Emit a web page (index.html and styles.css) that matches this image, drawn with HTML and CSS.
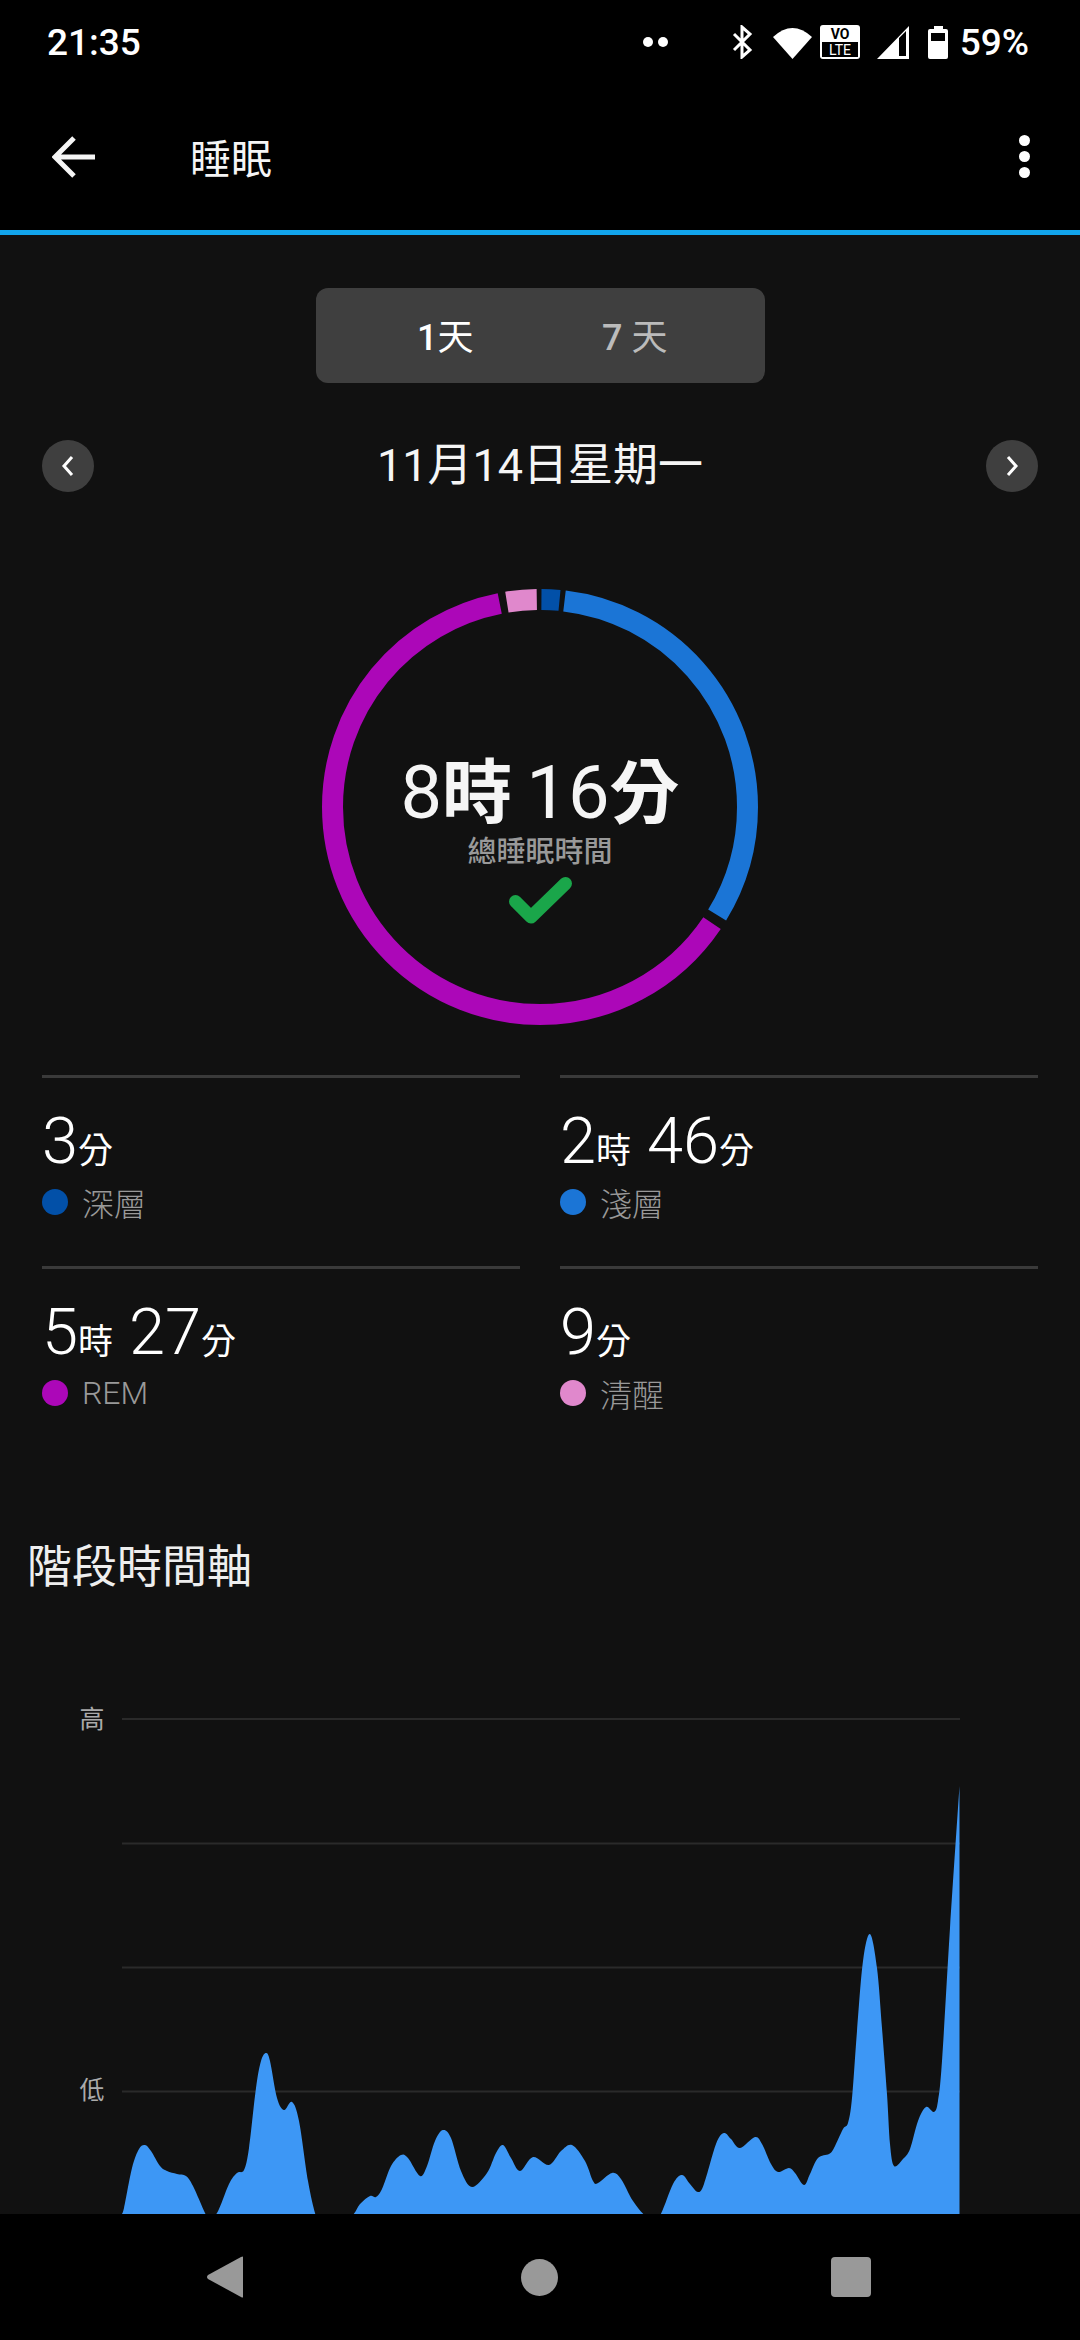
FILE: index.html
```html
<!DOCTYPE html>
<html lang="zh-Hant">
<head>
  <meta charset="UTF-8" />
  <title>睡眠</title>
  <link rel="stylesheet" href="styles.css">
</head>
<body>

  <div class="screen">
    <header class="top">
      <div class="status">
        <span class="clock">21:35</span>
        <div class="status-icons">
          <svg class="dots" width="25" height="10" viewBox="0 0 25 10"><circle cx="5" cy="5" r="5"/><circle cx="20" cy="5" r="5"/></svg>
          <svg class="bt" width="21" height="34" viewBox="0 0 21 34"><path d="M2 9 L18 25 L10 32 V2 L18 9 L2 25" fill="none" stroke="#fff" stroke-width="3"/></svg>
          <svg class="wifi" width="39" height="33" viewBox="0 0 39 33"><path d="M0 11 Q19.5 -7 39 11 L19.5 33 Z"/></svg>
          <svg class="volte" width="40" height="34" viewBox="0 0 40 34">
            <rect width="40" height="34" rx="3"/>
            <rect x="2" y="17" width="36" height="15" fill="#000"/>
            <text x="20" y="14" class="volte-top">VO</text>
            <text x="20" y="30" class="volte-bottom">LTE</text>
          </svg>
          <svg class="signal" width="32" height="33" viewBox="0 0 32 33"><path fill-rule="evenodd" d="M0 33 L32 0 V33 Z M22 12 V30 H29 V5 Z"/></svg>
          <svg class="battery" width="20" height="33" viewBox="0 0 20 33"><path fill-rule="evenodd" d="M6 0 H15 V3 H18 Q20 3 20 5 V31 Q20 33 18 33 H2 Q0 33 0 31 V5 Q0 3 2 3 H6 Z M3 7 V15 H17 V7 Z"/></svg>
          <span class="pct">59%</span>
        </div>
      </div>
      <div class="toolbar">
        <svg class="back" width="44" height="42" viewBox="0 0 44 42"><path d="M43 21 H4 M22 2 L3 21 L22 40" fill="none" stroke="#f5f5f5" stroke-width="5"/></svg>
        <h1 class="page-title">睡眠</h1>
        <svg class="kebab" width="11" height="44" viewBox="0 0 11 44"><circle cx="5.5" cy="5.5" r="5.5"/><circle cx="5.5" cy="21.5" r="5.5"/><circle cx="5.5" cy="37.5" r="5.5"/></svg>
      </div>
    </header>

    <main class="content">
      <div class="toggle">
        <span class="toggle-item active"><span class="num">1</span>天</span>
        <span class="toggle-item"><span class="num">7</span> 天</span>
      </div>

      <div class="date-row">
        <span class="round-btn"><svg width="14" height="20" viewBox="0 0 14 20"><path d="M11 1 L3 10 L11 19" fill="none" stroke="#fff" stroke-width="3"/></svg></span>
        <span class="date">11月14日星期一</span>
        <span class="round-btn"><svg width="14" height="20" viewBox="0 0 14 20"><path d="M3 1 L11 10 L3 19" fill="none" stroke="#fff" stroke-width="3"/></svg></span>
      </div>

      <div class="ring-box">
        <svg class="ring" width="436" height="436" viewBox="0 0 436 436">
          <g transform="rotate(-90 218 218)" fill="none" stroke-width="21">
            <circle cx="218" cy="218" r="207.5" pathLength="360" stroke="#0250a8" stroke-dasharray="5 355" stroke-dashoffset="-0.4"/>
            <circle cx="218" cy="218" r="207.5" pathLength="360" stroke="#1b75d6" stroke-dasharray="114.6 245.4" stroke-dashoffset="-6.8"/>
            <circle cx="218" cy="218" r="207.5" pathLength="360" stroke="#ac07b8" stroke-dasharray="224.8 135.2" stroke-dashoffset="-124"/>
            <circle cx="218" cy="218" r="207.5" pathLength="360" stroke="#e088cc" stroke-dasharray="8.3 351.7" stroke-dashoffset="-350.8"/>
          </g>
        </svg>
        <div class="ring-center">
          <div class="total">8<span class="total-unit">時</span> 16<span class="total-unit">分</span></div>
          <div class="total-label">總睡眠時間</div>
          <svg class="check" width="63" height="47" viewBox="0 0 63 47"><path d="M6.5 24.5 L22 40 L56.5 6.5" fill="none" stroke="#1aa64a" stroke-width="13" stroke-linejoin="round" stroke-linecap="round"/></svg>
        </div>
      </div>

      <div class="stages">
        <div class="stage">
          <div class="stage-value">3<span class="unit">分</span></div>
          <div class="stage-label"><i class="dot deep"></i>深層</div>
        </div>
        <div class="stage">
          <div class="stage-value">2<span class="unit">時</span> 46<span class="unit">分</span></div>
          <div class="stage-label"><i class="dot light"></i>淺層</div>
        </div>
        <div class="stage">
          <div class="stage-value">5<span class="unit">時</span> 27<span class="unit">分</span></div>
          <div class="stage-label"><i class="dot rem"></i>REM</div>
        </div>
        <div class="stage">
          <div class="stage-value">9<span class="unit">分</span></div>
          <div class="stage-label"><i class="dot awake"></i>清醒</div>
        </div>
      </div>

      <h2 class="section-title">階段時間軸</h2>

      <svg class="chart" width="1080" height="534" viewBox="0 1680 1080 534">
        <g class="chart-grid">
          <line x1="122" x2="960" y1="1718" y2="1718"/>
          <line x1="122" x2="960" y1="1842.5" y2="1842.5"/>
          <line x1="122" x2="960" y1="1966.5" y2="1966.5"/>
          <line x1="122" x2="960" y1="2090.5" y2="2090.5"/>
        </g>
        <text class="chart-label" x="92" y="1727">高</text>
        <text class="chart-label" x="92" y="2098">低</text>
        <path id="sleep-area" class="chart-area"></path>
      </svg>
    </main>

    <nav class="navbar">
      <svg width="36" height="42" viewBox="0 0 36 42"><path d="M36 1 V41 Q36 42 34 41 L1 23 Q-1 21 1 19 L34 1 Q36 0 36 1 Z"/></svg>
      <svg class="nav-home" width="37" height="37" viewBox="0 0 37 37"><circle cx="18.5" cy="18.5" r="18.5"/></svg>
      <svg width="40" height="40" viewBox="0 0 40 40"><rect width="40" height="40" rx="4"/></svg>
    </nav>
  </div>

  <script src="chart.js"></script>
</body>
</html>
```

FILE: styles.css
```css
* {
  box-sizing: border-box;
}
html, body {
  margin: 0;
  padding: 0;
}
body {
  width: 1080px;
  height: 2340px;
  background: #000;
  color: #fff;
  font-family: Roboto, "Noto Sans CJK TC", sans-serif;
  overflow: hidden;
}
svg {
  display: block;
  fill: #fff;
}
.screen {
  height: 2340px;
  display: flex;
  flex-direction: column;
}

/* top */
.top {
  background: #000;
  border-bottom: 5px solid #12a5ec;
  height: 235px;
  flex: none;
}
.status {
  height: 84px;
  padding: 0 51px 0 47px;
  display: flex;
  align-items: center;
  justify-content: space-between;
}
.clock, .pct {
  font-size: 37px;
  font-weight: 500;
}
.status-icons {
  display: flex;
  align-items: center;
}
.dots { margin-right: 64px; }
.bt { margin-right: 20px; }
.wifi { margin-right: 8px; }
.volte { margin-right: 17px; }
.signal { margin-right: 19px; }
.battery { margin-right: 12px; }
.volte-top, .volte-bottom {
  text-anchor: middle;
  font-size: 14px;
}
.volte-top {
  fill: #000;
  font-weight: 700;
}
.toolbar {
  height: 146px;
  padding: 0 52px;
  display: flex;
  align-items: center;
}
.page-title {
  margin: 0 0 3px 94px;
  font-size: 41px;
  font-weight: 400;
  color: #f5f5f5;
}
.kebab {
  margin-left: auto;
  margin-right: -2px;
}

/* content */
.content {
  flex: 1;
  min-height: 0;
  overflow: hidden;
  background: #111;
  padding-top: 53px;
}
.toggle {
  width: 449px;
  height: 95px;
  margin: 0 auto;
  padding: 0 35px 3px;
  background: #3f3f3f;
  border-radius: 12px;
  display: flex;
  align-items: center;
}
.toggle-item {
  flex: 1;
  text-align: center;
  font-size: 36px;
  color: #bbb;
}
.toggle-item.active {
  color: #fff;
}
.num {
  font-weight: 500;
}
.date-row {
  height: 52px;
  margin-top: 57px;
  padding: 0 42px;
  display: flex;
  align-items: center;
  justify-content: space-between;
}
.round-btn {
  width: 52px;
  height: 52px;
  border-radius: 50%;
  background: #3f3f3f;
  display: flex;
  align-items: center;
  justify-content: center;
}
.date {
  font-size: 45px;
  line-height: 52px;
  color: #f5f5f5;
}

/* ring */
.ring-box {
  position: relative;
  width: 436px;
  height: 436px;
  margin: 97px auto 0;
}
.ring-center {
  position: absolute;
  inset: 0;
  padding-top: 162px;
  display: flex;
  flex-direction: column;
  align-items: center;
}
.total {
  font-size: 74px;
  line-height: 84px;
  word-spacing: -4px;
  color: #f5f5f5;
  white-space: nowrap;
}
.total-unit {
  font-size: 70px;
  line-height: 1;
  font-weight: 700;
}
.total-label {
  font-size: 29px;
  line-height: 34px;
  font-weight: 500;
  color: #999;
}
.check {
  margin-top: 8px;
}

/* stage grid */
.stages {
  margin-top: 50px;
  padding: 0 42px;
  display: grid;
  grid-template-columns: 478px 478px;
  column-gap: 40px;
}
.stage {
  height: 191px;
  border-top: 3px solid #3a3a3a;
  padding-top: 28px;
}
.stage-value {
  font-size: 65px;
  line-height: 70px;
  font-weight: 300;
  color: #fff;
  white-space: nowrap;
}
.unit {
  font-size: 35px;
  line-height: 1;
  font-weight: 400;
}
.stage-label {
  margin-top: 6px;
  height: 40px;
  display: flex;
  align-items: center;
  font-size: 32px;
  font-weight: 300;
  color: #999;
}
.dot {
  width: 26px;
  height: 26px;
  border-radius: 50%;
  margin-right: 14px;
}
.deep { background: #0250a8; }
.light { background: #1b75d6; }
.rem { background: #ac07b8; }
.awake { background: #e088cc; }

/* chart */
.section-title {
  margin: 81px 0 0;
  padding-left: 27px;
  font-size: 45px;
  line-height: 60px;
  font-weight: 400;
  color: #eee;
}
.chart {
  margin-top: 83px;
}
.chart-grid line {
  stroke: #2a2a2a;
  stroke-width: 2;
}
.chart-label {
  fill: #aaa;
  font-size: 25px;
  text-anchor: middle;
}
.chart-area {
  fill: #3d97f5;
}

/* nav */
.navbar {
  height: 126px;
  flex: none;
  background: #000;
  padding: 0 209px 0 207px;
  display: flex;
  align-items: center;
  justify-content: space-between;
}
.navbar svg {
  fill: #999;
}
.nav-home {
  margin-left: 5px;
}
```

FILE: chart.js
```js
// traced points of the sleep stage curve, page coordinates
const points = [
  [121,2214],[124,2207],[132,2167],[139,2148],[145,2144],[151,2150],[160,2165],[167,2170],
  [177,2173],[186,2175],[193,2185],[205,2212],[208,2216],[217,2212],[229,2183],[237,2172],
  [244,2169],[249,2147],[256,2087],[261,2060],[266,2052],[270,2060],[277,2097],[284,2109],
  [292,2101],[299,2120],[308,2180],[315,2212],[318,2216],[349,2216],[360,2203],[370,2195],
  [376,2196],[382,2188],[391,2165],[401,2154],[408,2157],[420,2175],[427,2165],[435,2140],
  [443,2129],[451,2137],[461,2170],[472,2186],[487,2172],[496,2152],[503,2144],[511,2157],
  [520,2170],[533,2156],[549,2164],[561,2150],[572,2144],[585,2160],[593,2180],[598,2182],
  [612,2172],[621,2178],[633,2200],[647,2216],[659,2216],[673,2183],[682,2174],[690,2183],
  [698,2191],[704,2183],[716,2143],[724,2132],[731,2138],[740,2147],[755,2136],[762,2143],
  [771,2163],[778,2171],[789,2167],[795,2172],[804,2184],[810,2173],[818,2157],[829,2153],
  [834,2147],[843,2128],[848,2122],[852,2097],[857,2030],[863,1960],[870,1933],[877,1967],
  [882,2027],[887,2093],[890,2143],[894,2165],[903,2158],[910,2148],[918,2120],[926,2106],
  [934,2111],[938,2100],[942,2060],[950,1927],[959.5,1785]
];

let d = `M${points[0][0]} ${points[0][1]}`;
for (let i = 0; i < points.length - 1; i++) {
  const p0 = points[i - 1] || points[i];
  const p1 = points[i];
  const p2 = points[i + 1];
  const p3 = points[i + 2] || p2;
  const c1x = p1[0] + (p2[0] - p0[0]) / 6;
  const c1y = p1[1] + (p2[1] - p0[1]) / 6;
  const c2x = p2[0] - (p3[0] - p1[0]) / 6;
  const c2y = p2[1] - (p3[1] - p1[1]) / 6;
  d += ` C${c1x} ${c1y} ${c2x} ${c2y} ${p2[0]} ${p2[1]}`;
}
d += ' V2214 H121 Z';
document.getElementById('sleep-area').setAttribute('d', d);
```
